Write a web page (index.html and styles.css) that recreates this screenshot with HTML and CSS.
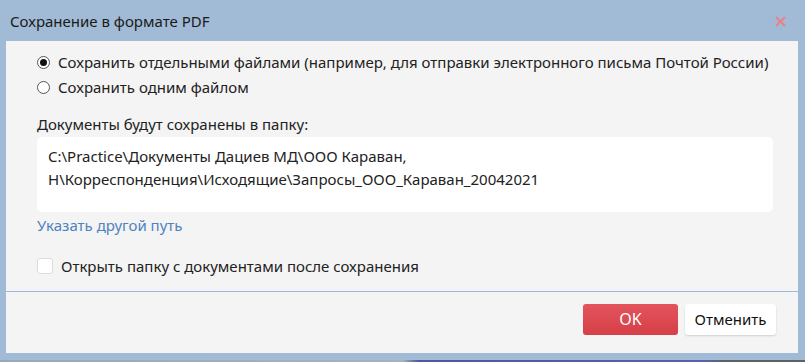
FILE: index.html
```html
<!DOCTYPE html>
<html lang="ru">
<head>
    <meta charset="UTF-8">
    <title>Сохранение в формате PDF</title>
    <link rel="stylesheet" href="styles.css">
</head>
<body>
    <div id="dialog">
        <!--заголовок-->
        <div class="head">
            <span class="title">Сохранение в формате PDF</span>
            <span class="close">
                <svg width="11" height="11" viewBox="0 0 11 11"><path d="M1 1L10 10M10 1L1 10" stroke="#ec7f8a" stroke-width="2"/></svg>
            </span>
        </div>
        <div class="panel">
            <div class="body">
                <label class="radio active"><i></i>Сохранить отдельными файлами (например, для отправки электронного письма Почтой России)</label>
                <label class="radio"><i></i>Сохранить одним файлом</label>
                <div class="caption">Документы будут сохранены в папку:</div>
                <div class="path">C:\Practice\Документы Дациев МД\ООО Караван, Н\Корреспонденция\Исходящие\Запросы_ООО_Караван_20042021</div>
                <a class="link">Указать другой путь</a>
                <label class="check"><i></i>Открыть папку с документами после сохранения</label>
            </div>
            <div class="foot">
                <span class="btn ok">OK</span>
                <span class="btn cancel">Отменить</span>
            </div>
        </div>
        <div class="under"></div>
    </div>
</body>
</html>
```

FILE: styles.css
```css
*{
    padding: 0;
    margin: 0;
    box-sizing: border-box;
    user-select: none;
}
body{
    background-color: #a1bad5;
    font-family: "Noto Sans", "Liberation Sans", sans-serif;
    color: #222;
}
#dialog{
    width: 805px;
    height: 362px;
    display: flex;
    flex-direction: column;
}
#dialog .head{
    height: 41px;
    display: flex;
    align-items: center;
    justify-content: space-between;
    padding: 0 19px 0 10px;
}
#dialog .title{
    font-size: 15px;
    color: #1a1a1a;
}
#dialog .close{
    display: flex;
    margin-top: 1px;
}
#dialog .panel{
    margin: 0 7px 0 6px;
    height: 312px;
    background-color: #f4f4f4;
    display: flex;
    flex-direction: column;
}
#dialog .body{
    height: 251px;
    border-bottom: 1px solid #9ab9dd;
    padding: 9px 25px 0 31px;
    display: flex;
    flex-direction: column;
    font-size: 15px;
}
#dialog .radio{
    display: flex;
    align-items: center;
    height: 25px;
    line-height: 25px;
}
#dialog .radio i{
    width: 13px;
    height: 13px;
    border: 1px solid #555;
    border-radius: 50%;
    margin-right: 8px;
    background-color: #fff;
    display: flex;
    align-items: center;
    justify-content: center;
}
#dialog .radio.active i::after{
    content: "";
    width: 7px;
    height: 7px;
    border-radius: 50%;
    background-color: #111;
}
#dialog .caption{
    margin-top: 12px;
    height: 24px;
    line-height: 24px;
}
#dialog .path{
    margin-top: 1px;
    height: 75px;
    background-color: #fff;
    border-radius: 5px;
    padding: 8px 30px 0 11px;
    line-height: 23px;
}
#dialog .link{
    margin-top: 1px;
    color: #4f82c0;
    height: 24px;
    line-height: 24px;
    cursor: pointer;
}
#dialog .check{
    margin-top: 18px;
    display: flex;
    align-items: center;
    height: 22px;
}
#dialog .check i{
    width: 16px;
    height: 16px;
    border: 1px solid #dcdcdc;
    border-radius: 3px;
    background-color: #fff;
    margin-right: 8px;
}
#dialog .foot{
    flex: 1;
    display: flex;
    justify-content: flex-end;
    align-items: flex-start;
    padding: 12px 22px 0 0;
    gap: 7px;
}
#dialog .btn{
    height: 31px;
    line-height: 31px;
    text-align: center;
    font-size: 15px;
    border-radius: 3px;
    cursor: pointer;
}
#dialog .btn.ok{
    width: 95px;
    color: #fff;
    background: linear-gradient(#e3545c, #d63f47);
    font-size: 16px;
}
#dialog .btn.cancel{
    width: 91px;
    background-color: #fff;
    color: #111;
    box-shadow: 0 1px 2px rgba(0,0,0,0.15);
}
#dialog .under{
    margin-top: 7px;
    height: 2px;
    background: linear-gradient(90deg, #9aa7b6 0, #a6b2c0 50%, #4a5a9a 52%, #5563a8 88%, #606060 90%);
}
```
